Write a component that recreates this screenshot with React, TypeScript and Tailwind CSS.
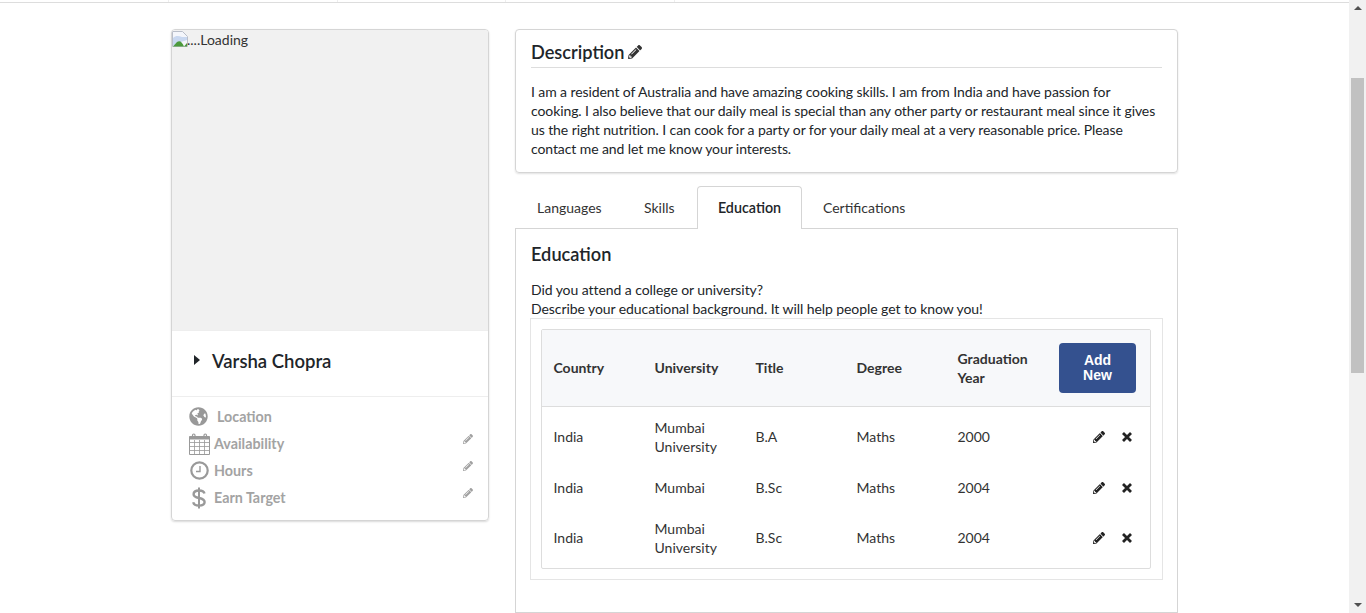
import React from "react";
import { FaPencilAlt, FaGlobeAmericas } from "react-icons/fa";

const rows = [
  ["India", "Mumbai University", "B.A", "Maths", "2000"],
  ["India", "Mumbai", "B.Sc", "Maths", "2004"],
  ["India", "Mumbai University", "B.Sc", "Maths", "2004"],
];

function BrokenImage() {
  return (
    <svg width="16" height="16" viewBox="0 0 16 16" className="shrink-0">
      <path d="M0.5 0.5H10.5L15.5 5.5V15.5H0.5Z" fill="#f4f6fb" stroke="#b9bec9" />
      <path d="M1 7C4 4 7 5 10 6L15 6V9L9 11L1 15Z" fill="#c9d8f0" />
      <path d="M1 15.5L5 11C8 9 10 11 12 15.5Z" fill="#4c9a3c" />
      <path d="M12 15.5L15 12V15.5Z" fill="#4c9a3c" />
    </svg>
  );
}

function CalendarIcon() {
  return (
    <svg width="21" height="22" viewBox="0 0 21 22" fill="none" stroke="#999">
      <path d="M0.5 3.5H20.5V21.5H0.5Z" strokeWidth="1" />
      <path d="M0.5 5H20.5" strokeWidth="3" />
      <path d="M0.5 9.5H20.5M0.5 13.5H20.5M0.5 17.5H20.5M5.5 7V21M10.5 7V21M15.5 7V21" strokeWidth="1" opacity="0.8" />
      <path d="M6 4.5V2.2C6 0.6 3.5 0.6 3.5 2.2V4M15 4.5V2.2C15 0.6 17.5 0.6 17.5 2.2V4" strokeWidth="1.2" />
    </svg>
  );
}

function ClockIcon() {
  return (
    <svg width="19" height="19" viewBox="0 0 19 19" fill="none" stroke="#999">
      <circle cx="9.5" cy="9.5" r="8.2" strokeWidth="2.2" />
      <path d="M10 5V10.5H6" strokeWidth="1.4" />
    </svg>
  );
}

function DollarIcon() {
  return (
    <svg width="14" height="22" viewBox="0 0 14 22" fill="none" stroke="#999" strokeWidth="2.4">
      <path d="M12.5 6.5C12 4.5 10 3.5 7 3.5C3.5 3.5 1.6 5 1.6 7.2C1.6 12.5 12.6 9.5 12.6 15C12.6 17.2 10.5 18.6 7 18.6C3.8 18.6 1.8 17.5 1.2 15.2" />
      <path d="M7 0.5V21.5" strokeWidth="2" />
    </svg>
  );
}

function XIcon() {
  return (
    <svg width="10" height="10" viewBox="0 0 10 10" fill="none" stroke="#222" strokeWidth="2.8">
      <path d="M1 1L9 9M9 1L1 9" />
    </svg>
  );
}

function InfoRow({ icon, label, edit, gap }: { icon: React.ReactNode; label: string; edit?: boolean; gap?: boolean }) {
  return (
    <div className="flex h-[27px] items-center">
      <div className="flex w-[22px] justify-center text-[#999]">{icon}</div>
      <span className={`${gap ? "ml-[7px]" : "ml-[4px]"} flex-1 text-[14.3px] font-bold text-[#a3a3a3]`}>{label}</span>
      {edit && <FaPencilAlt className="-mr-px -mt-[9px] text-[#a0a0a0]" size={10} />}
    </div>
  );
}

export default function App() {
  return (
    <div className="relative flex h-[613px] w-full overflow-hidden bg-white font-['Lato','Liberation_Sans',sans-serif] text-[14px] leading-[19px] text-[#212529]">
      <div className="min-w-0 flex-1">
        <div className="flex h-[3px] border-b border-[#ddd]">
          <div className="ml-[168px] w-[170px] border-x border-[#eee]" />
          <div className="w-[168px] border-r border-[#eee]" />
          <div className="w-[169px] border-r border-[#eee]" />
        </div>
        <div className="ml-[171px] mt-[26px] flex w-[1007px] items-start gap-[26px]">
          <div className="w-[318px] overflow-hidden rounded-[4px] border border-[#d5d5d5] shadow-[0_1px_2px_rgba(0,0,0,0.15)]">
            <div className="flex h-[300px] items-start bg-[#f1f1f1] pt-px">
              <BrokenImage />
              <span className="-ml-px -mt-px text-[14px] leading-[19px] text-[#333]">....Loading</span>
            </div>
            <div className="flex h-[67px] items-start border-y border-[#eee] pl-[22px] pt-[18px]">
              <div className="mt-[6px] h-0 w-0 border-y-[5.5px] border-l-[6px] border-y-transparent border-l-[#212529]" />
              <span className="ml-[12px] text-[18.5px] leading-[24px] font-semibold text-[#212529]">Varsha Chopra</span>
            </div>
            <div className="px-[16px] pb-[9px] pt-[6px]">
              <InfoRow icon={<FaGlobeAmericas size={19} className="-ml-[2px]" />} label="Location" gap />
              <InfoRow icon={<CalendarIcon />} label="Availability" edit />
              <InfoRow icon={<ClockIcon />} label="Hours" edit />
              <InfoRow icon={<DollarIcon />} label="Earn Target" edit />
            </div>
          </div>
          <div className="w-[663px]">
            <div className="h-[144px] rounded-[4px] border border-[#d5d5d5] px-[15px] pt-[9px] shadow-[0_1px_2px_rgba(0,0,0,0.12)]">
              <div className="flex h-[29px] items-center gap-[4px] border-b border-[#ddd] pb-[2px]">
                <span className="text-[18.2px] leading-[24px] font-semibold text-[#212529]">Description</span>
                <FaPencilAlt size={14} className="text-[#333]" />
              </div>
              <p className="mt-[14px] tracking-[-0.09px]">
                I am a resident of Australia and have amazing cooking skills. I am from India and have passion for cooking. I also believe that our daily meal is special than any other party or restaurant meal since it gives us the right nutrition. I can cook for a party or for your daily meal at a very reasonable price. Please contact me and let me know your interests.
              </p>
            </div>
            <div className="relative z-10 mt-[13px] -mb-px flex h-[43px]">
              <div className="w-[108px] pl-[22px] pt-[12px] text-[#333]">Languages</div>
              <div className="w-[74px] pl-[21px] pt-[12px] text-[#333]">Skills</div>
              <div className="w-[105px] rounded-t-[4px] border border-b-0 border-[#d5d5d5] bg-white pt-[11px] text-center text-[14.3px] font-semibold text-[#212529]">Education</div>
              <div className="pl-[21px] pt-[12px] text-[#333]">Certifications</div>
            </div>
            <div className="h-[385px] border border-[#d5d5d5] px-[14px] pt-[13px]">
              <h2 className="pl-px text-[18.2px] leading-[24px] font-semibold text-[#212529]">Education</h2>
              <p className="mt-[14px] pl-px tracking-[-0.07px]">Did you attend a college or university?</p>
              <p className="pl-px tracking-[-0.07px]">Describe your educational background. It will help people get to know you!</p>
              <div className="w-[633px] border border-[#e5e5e5] pb-[10px] pl-[10px] pr-[11px] pt-[10px]">
                <div className="overflow-hidden rounded-[2px] border border-[#ddd]">
                  <div className="flex h-[77px] items-center border-b border-[#ddd] bg-[#f7f8fa] pb-px pl-[11.5px] font-bold text-[#333]">
                    <div className="w-[101px]">Country</div>
                    <div className="w-[101px]">University</div>
                    <div className="w-[101px]">Title</div>
                    <div className="w-[101px]">Degree</div>
                    <div className="w-[101.5px] pr-[20px]">Graduation Year</div>
                    <button className="mt-px h-[50px] w-[77px] rounded-[4px] bg-[#34518f] px-[16px] font-['Liberation_Sans',sans-serif] text-[14px] leading-[15px] font-bold text-white">Add New</button>
                  </div>
                  {rows.map((r, i) => (
                    <div key={i} className={`flex items-center pl-[11.5px] text-[#333] ${i === 1 ? "h-[41px]" : "h-[60px] pb-px"}`}>
                      <div className="w-[101px]">{r[0]}</div>
                      <div className="w-[101px] pr-[20px]">{r[1]}</div>
                      <div className="w-[101px]">{r[2]}</div>
                      <div className="w-[101px]">{r[3]}</div>
                      <div className="w-[101px]">{r[4]}</div>
                      <div className="flex w-[73.5px] items-center justify-end gap-[17px] text-[#222]">
                        <FaPencilAlt size={12} />
                        <XIcon />
                      </div>
                    </div>
                  ))}
                </div>
              </div>
            </div>
          </div>
        </div>
      </div>
      <div className="flex h-[613px] w-[17px] shrink-0 flex-col items-center justify-between bg-[#f1f1f1] py-[6px]">
        <div className="h-0 w-0 border-x-[4px] border-b-[4px] border-x-transparent border-b-[#505050]" />
        <div className="absolute top-[78px] h-[295px] w-[13px] bg-[#c1c1c1]" />
        <div className="h-0 w-0 border-x-[4px] border-t-[4px] border-x-transparent border-t-[#505050]" />
      </div>
    </div>
  );
}
